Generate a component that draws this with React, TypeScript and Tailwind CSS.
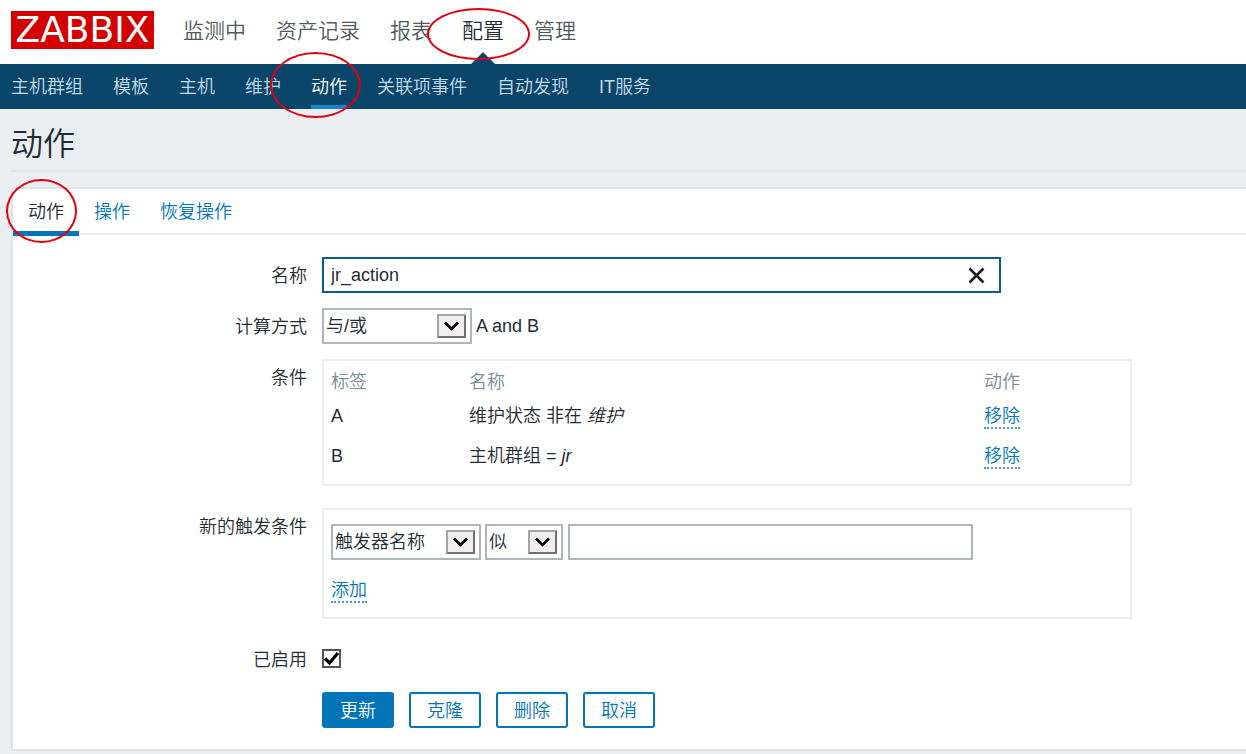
import * as React from "react";
import { clsx } from "clsx";

const mainMenu = ["监测中", "资产记录", "报表", "配置", "管理"];
const subMenu = [
  "主机群组",
  "模板",
  "主机",
  "维护",
  "动作",
  "关联项事件",
  "自动发现",
  "IT服务",
];
const tabs = ["动作", "操作", "恢复操作"];

const conditions = [
  { label: "A", text: "维护状态 非在", value: "维护" },
  { label: "B", text: "主机群组 =", value: "jr" },
];

// Red hand-drawn style ring laid over a menu entry
const Ring = ({ className }: { className: string }) => (
  <span
    aria-hidden="true"
    className={clsx(
      "pointer-events-none absolute z-10 rounded-[50%] border-2 border-[#e00010]",
      className
    )}
  />
);

const FormRow = ({
  label,
  htmlFor,
  children,
}: {
  label?: string;
  htmlFor?: string;
  children: React.ReactNode;
}) => (
  <div className="flex gap-[15px]">
    <div className="w-[294px] shrink-0 pt-0.5 text-right leading-[34px]">
      {label && <label htmlFor={htmlFor}>{label}</label>}
    </div>
    <div className="min-w-0 grow">{children}</div>
  </div>
);

const SelectBox = ({
  className,
  option,
  ...props
}: { option: string } & React.SelectHTMLAttributes<HTMLSelectElement>) => (
  <div className={clsx("relative h-9 shrink-0", className)}>
    <select
      className="h-full w-full appearance-none border-2 border-[#acb6bb] bg-white pl-0.5 outline-none"
      {...props}
    >
      <option>{option}</option>
    </select>
    <span className="pointer-events-none absolute top-1.5 right-1.5 flex h-6 w-[29px] items-center justify-center border-2 border-t-[#a5a5a5] border-r-[#707070] border-b-[#707070] border-l-[#a5a5a5] bg-[#f0eeee]">
      <svg width="15" height="10" viewBox="0 0 15 10" fill="none">
        <path d="M1 1.5 7.5 8 14 1.5" stroke="#000" strokeWidth="2.6" />
      </svg>
    </span>
  </div>
);

const DottedLink = ({ children }: { children: React.ReactNode }) => (
  <a
    href="#"
    className="inline-block border-b-2 border-dotted border-[#4a9aca] leading-[22px] text-[#0275b8]"
  >
    {children}
  </a>
);

const Button = ({
  primary = false,
  children,
}: {
  primary?: boolean;
  children: React.ReactNode;
}) => (
  <button
    type="button"
    className={clsx(
      "flex h-9 w-[72px] items-center justify-center rounded-[3px] border-2 border-[#0275b8] pt-0.5",
      primary ? "bg-[#0275b8] text-white" : "bg-white text-[#0275b8]"
    )}
  >
    {children}
  </button>
);

export default function App() {
  const [name, setName] = React.useState("jr_action");
  const [enabled, setEnabled] = React.useState(true);

  return (
    <div className="min-h-screen overflow-hidden bg-[#ebeef0] pb-1 font-['Liberation_Sans','Noto_Sans_CJK_SC',sans-serif] text-[18px] leading-6 font-[350] text-[#1f2c33]">
      <header className="flex h-16 items-start bg-white pt-[11px] pl-[11px]">
        <a
          href="#"
          className="flex h-[38px] w-[143px] items-center justify-center bg-[#d40000] font-['DejaVu_Sans',sans-serif] text-[36px] leading-none font-normal text-white"
        >
          ZABBIX
        </a>
        <nav className="ml-[29px] flex h-full gap-[30px] text-[21px]">
          {mainMenu.map((item) => (
            <a
              key={item}
              href="#"
              className={clsx(
                "relative flex h-full items-center pb-3.5",
                item === "配置" ? "text-[#1f2c33]" : "text-[#4f5a60]"
              )}
            >
              {item}
              {item === "配置" && (
                <>
                  <span className="absolute bottom-0 left-1/2 -translate-x-1/2 border-x-12 border-b-12 border-x-transparent border-b-[#0a466a]" />
                  <Ring className="-top-[3px] -left-[35px] h-[52px] w-[103px]" />
                </>
              )}
            </a>
          ))}
        </nav>
      </header>

      <nav className="flex h-[45px] gap-[30px] bg-[#0a466a] pl-[11px] text-[#c3dbe9]">
        {subMenu.map((item) => (
          <a
            key={item}
            href="#"
            className={clsx(
              "relative flex items-center border-y-4 border-transparent",
              item === "动作" && "border-b-[#1585d0] text-white"
            )}
          >
            {item}
            {item === "动作" && (
              <Ring className="-top-4 -left-[41px] h-[66px] w-[91px]" />
            )}
          </a>
        ))}
      </nav>

      <main className="pl-[11px]">
        <h1 className="border-b-2 border-[#dfe4e7] pt-4 pb-[7px] text-[32px] leading-[38px]">
          动作
        </h1>

        <form className="mt-[15px] border-2 border-r-0 border-[#dfe4e7] bg-white">
          <div
            role="tablist"
            className="flex h-[46px] border-b-2 border-[#ebeef0]"
          >
            {tabs.map((tab, i) => (
              <button
                key={tab}
                type="button"
                role="tab"
                aria-selected={i === 0}
                className={clsx(
                  "relative h-[47px] border-b-5 px-[15px] pt-1",
                  i === 0
                    ? "border-[#0275b8]"
                    : "border-transparent text-[#0275b8]"
                )}
              >
                {tab}
                {i === 0 && (
                  <Ring className="-top-2.5 -left-[7px] h-16 w-[71px]" />
                )}
              </button>
            ))}
          </div>

          <div className="flex flex-col gap-[15px] pt-[22px] pb-[21px]">
            <FormRow label="名称" htmlFor="name">
              <div className="relative max-w-[679px]">
                <input
                  id="name"
                  type="text"
                  value={name}
                  onChange={(e) => setName(e.target.value)}
                  className="block h-9 w-full border-2 border-[#0a5c8e] bg-white px-[7px] outline-none"
                />
                <button
                  type="button"
                  aria-label="清除"
                  onClick={() => setName("")}
                  className="absolute inset-y-0 right-4 flex items-center"
                >
                  <svg width="17" height="17" viewBox="0 0 17 17">
                    <path
                      d="M1.5 1.5 15.5 15.5M15.5 1.5 1.5 15.5"
                      stroke="#1c1c1c"
                      strokeWidth="2.6"
                    />
                  </svg>
                </button>
              </div>
            </FormRow>

            <FormRow label="计算方式" htmlFor="calc">
              <div className="flex items-center gap-1">
                <SelectBox id="calc" className="w-[150px]" option="与/或" />
                <span>A and B</span>
              </div>
            </FormRow>

            <FormRow label="条件">
              <div className="mb-[7px] max-w-[810px] border-2 border-[#ebeef0] pt-[7px] pb-2">
                <table className="w-full table-fixed text-left">
                  <thead>
                    <tr className="h-7 text-[#768d99]">
                      <th className="w-[145px] pl-[7px] font-[350]">标签</th>
                      <th className="w-[515px] font-[350]">名称</th>
                      <th className="font-[350]">动作</th>
                    </tr>
                  </thead>
                  <tbody>
                    {conditions.map((c) => (
                      <tr key={c.label} className="h-10">
                        <td className="pl-[7px]">{c.label}</td>
                        <td>
                          {c.text} <em>{c.value}</em>
                        </td>
                        <td>
                          <DottedLink>移除</DottedLink>
                        </td>
                      </tr>
                    ))}
                  </tbody>
                </table>
              </div>
            </FormRow>

            <FormRow label="新的触发条件" htmlFor="condition-type">
              <div className="mb-[7px] max-w-[810px] border-2 border-[#ebeef0] px-[7px] py-3.5">
                <div className="mb-[18px] flex gap-1">
                  <SelectBox
                    id="condition-type"
                    className="w-[150px]"
                    option="触发器名称"
                  />
                  <SelectBox
                    aria-label="运算符"
                    className="w-[78px]"
                    option="似"
                  />
                  <input
                    type="text"
                    aria-label="值"
                    className="ml-px h-9 w-[405px] min-w-0 border-2 border-[#acb6bb] bg-white px-[7px] outline-none"
                  />
                </div>
                <DottedLink>添加</DottedLink>
              </div>
            </FormRow>

            <FormRow label="已启用" htmlFor="enabled">
              <div className="flex h-9 items-start pt-2">
                <div className="relative size-[19px]">
                  <input
                    id="enabled"
                    type="checkbox"
                    checked={enabled}
                    onChange={(e) => setEnabled(e.target.checked)}
                    className="peer block size-full appearance-none border-2 border-[#555] bg-white"
                  />
                  <svg
                    className="pointer-events-none absolute inset-0 hidden peer-checked:block"
                    viewBox="0 0 19 19"
                    fill="none"
                  >
                    <path
                      d="M3 9.5 7.5 14 16 4"
                      stroke="#000"
                      strokeWidth="3.2"
                    />
                  </svg>
                </div>
              </div>
            </FormRow>

            <FormRow>
              <div className="flex gap-[15px]">
                <Button primary>更新</Button>
                <Button>克隆</Button>
                <Button>删除</Button>
                <Button>取消</Button>
              </div>
            </FormRow>
          </div>
        </form>
      </main>
    </div>
  );
}
